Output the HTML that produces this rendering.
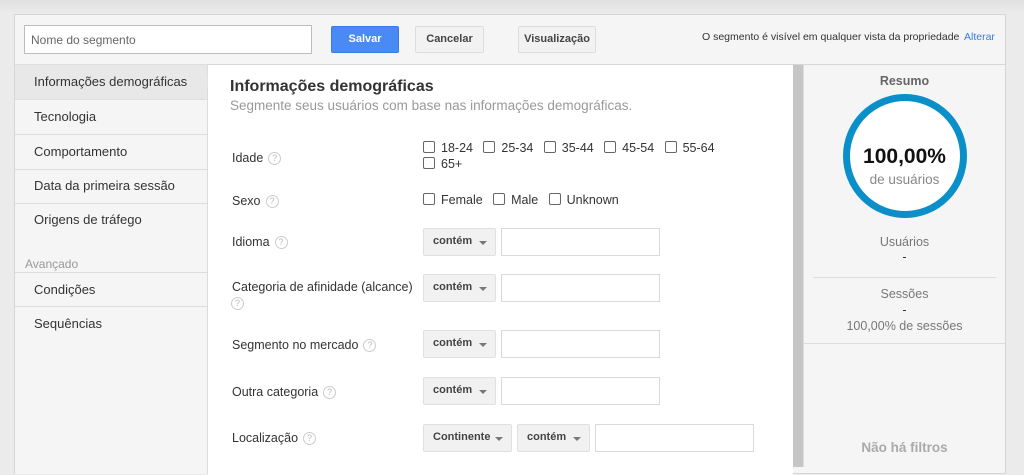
<!DOCTYPE html>
<html><head><meta charset="utf-8"><style>
*{box-sizing:border-box;margin:0;padding:0}
body{width:1024px;height:467px;overflow:hidden;background:#ebebeb;font-family:"Liberation Sans",Arial,sans-serif;position:relative;color:#333}
.a{position:absolute}
.t{position:absolute;white-space:nowrap}
.top{left:0;top:0;width:1024px;height:14px;background:linear-gradient(#e0e0e0,#ececec)}
.cont{left:14px;top:14px;width:992px;height:460px;border:1px solid #d6d6d6;background:#f5f5f5}
.btn{position:absolute;height:27px;border:1px solid #dcdcdc;background:#f2f2f2;border-radius:2px;font-size:11px;font-weight:bold;color:#444;text-align:center;line-height:25px}
.side{left:15px;top:64px;width:193px;height:410px;background:#f5f5f5;border-right:1px solid #ddd;border-top:1px solid #ddd}
.it{position:absolute;left:0;width:192px;height:35px;border-bottom:1px solid #ddd;font-size:13px;color:#333;padding-left:19px;line-height:34px}
.main{left:208px;top:65px;width:585px;height:410px;background:#fff}
.lbl{position:absolute;left:232px;font-size:12.5px;color:#333;white-space:nowrap}
.q{display:inline-block;width:13px;height:13px;border:1px solid #ccc;border-radius:50%;font-size:9px;color:#bbb;text-align:center;line-height:11px;margin-left:5px;vertical-align:middle}
.cb{display:inline-block;width:12px;height:12px;border:1px solid #666;border-radius:2px;vertical-align:-1px;margin-right:6px}
.chk{position:absolute;font-size:12.5px;color:#333;white-space:nowrap}
.dd{position:absolute;height:28px;background:#f1f1f1;border:1px solid #e0e0e0;border-radius:2px;font-size:11px;font-weight:bold;color:#444;padding-left:9px;line-height:25px}
.dd:after{content:"";position:absolute;right:8px;top:12px;border-left:4px solid transparent;border-right:4px solid transparent;border-top:4px solid #777}
.in{position:absolute;height:28px;background:#fff;border:1px solid #d9d9d9}
.c{position:absolute;left:804px;width:201px;text-align:center;font-size:12.5px;color:#777}
</style></head><body>
<div class="a top"></div>
<div class="a cont"></div>
<div class="a" style="left:24px;top:25px;width:288px;height:29px;background:#fff;border:1px solid #bdbdbd"></div>
<div class="t" style="left:31px;top:33px;font-size:12px;color:#666">Nome do segmento</div>
<div class="btn" style="left:331px;top:26px;width:68px;background:#4a8af4;border-color:#3b7ae4;color:#fff">Salvar</div>
<div class="btn" style="left:415px;top:26px;width:69px">Cancelar</div>
<div class="btn" style="left:518px;top:26px;width:78px">Visualização</div>
<div class="t" style="left:702px;top:31px;font-size:10.5px;color:#333">O segmento é visível em qualquer vista da propriedade</div>
<div class="t" style="left:964px;top:31px;font-size:10.5px;color:#3b7ae4">Alterar</div>
<div class="a" style="left:14px;top:64px;width:992px;height:1px;background:#d6d6d6"></div>

<div class="a side">
<div class="it" style="top:0;background:#e8e8e8">Informações demográficas</div>
<div class="it" style="top:35px">Tecnologia</div>
<div class="it" style="top:70px">Comportamento</div>
<div class="it" style="top:104px">Data da primeira sessão</div>
<div class="it" style="top:138px;border-bottom:none">Origens de tráfego</div>
<div class="t" style="left:10px;top:192px;font-size:12px;color:#999">Avançado</div>
<div class="it" style="top:207px;border-top:1px solid #ddd">Condições</div>
<div class="it" style="top:242px;border-bottom:none">Sequências</div>
</div>
<svg class="a" style="left:207px;top:65px" width="9" height="34"><path d="M0 0 L0 34 L0 24 L7 17 L0 10 Z" fill="#e8e8e8" stroke="#ddd"/></svg>

<div class="a main"></div>
<div class="t" style="left:230px;top:78px;font-size:16px;font-weight:bold;color:#333">Informações demográficas</div>
<div class="t" style="left:230px;top:98px;font-size:13.5px;color:#999">Segmente seus usuários com base nas informações demográficas.</div>

<div class="lbl" style="top:151px">Idade<span class="q">?</span></div>
<div class="chk" style="left:423px;top:141px"><span class="cb"></span>18-24&nbsp;&nbsp;&nbsp;<span class="cb"></span>25-34&nbsp;&nbsp;&nbsp;<span class="cb"></span>35-44&nbsp;&nbsp;&nbsp;<span class="cb"></span>45-54&nbsp;&nbsp;&nbsp;<span class="cb"></span>55-64</div>
<div class="chk" style="left:423px;top:157px"><span class="cb"></span>65+</div>
<div class="lbl" style="top:194px">Sexo<span class="q">?</span></div>
<div class="chk" style="left:423px;top:193px"><span class="cb"></span>Female&nbsp;&nbsp;&nbsp;<span class="cb"></span>Male&nbsp;&nbsp;&nbsp;<span class="cb"></span>Unknown</div>

<div class="lbl" style="top:235px">Idioma<span class="q">?</span></div>
<div class="dd" style="left:423px;top:228px;width:73px">contém</div>
<div class="in" style="left:501px;top:228px;width:159px"></div>

<div class="lbl" style="top:280px">Categoria de afinidade (alcance)</div>
<div class="lbl" style="top:296px;left:231px"><span class="q" style="margin-left:0">?</span></div>
<div class="dd" style="left:423px;top:274px;width:73px">contém</div>
<div class="in" style="left:501px;top:274px;width:159px"></div>

<div class="lbl" style="top:338px">Segmento no mercado<span class="q">?</span></div>
<div class="dd" style="left:423px;top:330px;width:73px">contém</div>
<div class="in" style="left:501px;top:330px;width:159px"></div>

<div class="lbl" style="top:385px">Outra categoria<span class="q">?</span></div>
<div class="dd" style="left:423px;top:377px;width:73px">contém</div>
<div class="in" style="left:501px;top:377px;width:159px"></div>

<div class="lbl" style="top:431px">Localização<span class="q">?</span></div>
<div class="dd" style="left:423px;top:424px;width:89px">Continente</div>
<div class="dd" style="left:517px;top:424px;width:73px">contém</div>
<div class="in" style="left:595px;top:424px;width:159px"></div>

<div class="a" style="left:793px;top:65px;width:10px;height:402px;background:#c6c6c6"></div>
<div class="a" style="left:803px;top:65px;width:1px;height:402px;background:#ddd"></div>

<div class="c" style="top:74px;font-weight:bold;color:#666;font-size:12.5px">Resumo</div>
<svg class="a" style="left:842px;top:93px" width="126" height="126"><circle cx="63" cy="63" r="58.5" fill="#fff" stroke="#0b8fc9" stroke-width="7"/></svg>
<div class="c" style="top:145px;font-size:21px;font-weight:bold;color:#111">100,00%</div>
<div class="c" style="top:172px;font-size:13.5px;color:#888">de usuários</div>
<div class="c" style="top:235px">Usuários</div>
<div class="c" style="top:250px;color:#333">-</div>
<div class="a" style="left:813px;top:277px;width:183px;height:1px;background:#ddd"></div>
<div class="c" style="top:287px">Sessões</div>
<div class="c" style="top:303px;color:#333">-</div>
<div class="c" style="top:319px">100,00% de sessões</div>
<div class="a" style="left:804px;top:343px;width:201px;height:1px;background:#ddd"></div>
<div class="c" style="top:440px;font-weight:bold;color:#aaa;font-size:13.5px">Não há filtros</div>
</body></html>
